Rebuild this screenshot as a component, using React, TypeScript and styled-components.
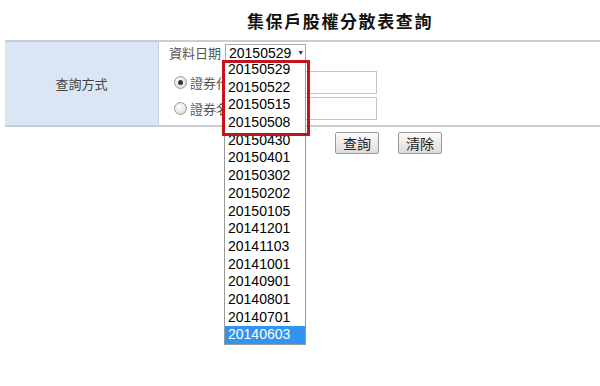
import React from "react";
import styled, { createGlobalStyle } from "styled-components";

const GlobalStyle = createGlobalStyle`
  body {
    margin: 0;
    background: #ffffff;
    font-family: "Liberation Sans", "Noto Sans CJK TC", sans-serif;
  }
`;

const Page = styled.div`
  width: 600px;
  height: 386px;
  overflow: hidden;
`;

const Title = styled.h1`
  margin: 0;
  height: 40px;
  padding-left: 80px;
  box-sizing: border-box;
  text-align: center;
  font-family: "Noto Sans CJK TC", sans-serif;
  font-size: 17px;
  font-weight: 700;
  letter-spacing: 1.6px;
  line-height: 42px;
  color: #111;
`;

const Table = styled.div`
  margin-left: 5px;
  display: grid;
  grid-template-columns: 154px 1fr;
  border-top: 2px solid #c9ced6;
  border-bottom: 2px solid #c9ced6;
`;

const LabelCell = styled.div`
  display: flex;
  align-items: center;
  justify-content: center;
  background: #dbe6f5;
  border-right: 1px solid #c6d0de;
  font-family: "Noto Sans CJK TC", sans-serif;
  font-size: 13px;
  color: #444;
`;

const ContentCell = styled.div`
  padding: 2px 0 2px 10px;
  display: flex;
  flex-direction: column;
`;

const DateRow = styled.div`
  display: flex;
  align-items: center;
  gap: 4px;
  height: 17px;
  margin-bottom: 10px;
`;

const FieldLabel = styled.span`
  font-family: "Noto Sans CJK TC", sans-serif;
  font-size: 13px;
  color: #555;
`;

const SelectWrap = styled.div`
  position: relative;
`;

const SelectBox = styled.div`
  width: 81px;
  height: 17px;
  box-sizing: border-box;
  border: 1px solid #a8a8a8;
  padding-left: 3px;
  display: flex;
  align-items: center;
  gap: 6px;
  font-size: 14px;
  color: #000;
  background: #fff;
`;

const Arrow = styled.span`
  font-size: 7px;
  color: #333;
`;

const DropList = styled.ul`
  position: absolute;
  top: 16px;
  left: -1px;
  width: 82px;
  margin: 0;
  padding: 0;
  list-style: none;
  box-sizing: border-box;
  border: 1px solid #9a9a9a;
  background: #fff;
  z-index: 2;
`;

const DropItem = styled.li<{ $active?: boolean }>`
  height: 17.7px;
  line-height: 17.7px;
  padding-left: 3px;
  font-size: 14px;
  color: ${(p) => (p.$active ? "#fff" : "#000")};
  background: ${(p) => (p.$active ? "#3194f0" : "transparent")};
`;

const Highlight = styled.div`
  position: absolute;
  top: 16px;
  left: -3px;
  width: 88px;
  height: 76px;
  box-sizing: border-box;
  border: 3px solid #c3141d;
  z-index: 3;
`;

const RadioRow = styled.div`
  display: grid;
  grid-template-columns: 130px 73px;
  align-items: center;
  height: 23px;
  padding-left: 5px;
  margin-bottom: 3px;
`;

const RadioLabel = styled.label`
  display: flex;
  align-items: center;
  gap: 3px;
  font-family: "Noto Sans CJK TC", sans-serif;
  font-size: 13px;
  color: #555;
`;

const Radio = styled.span<{ $checked?: boolean }>`
  width: 11px;
  height: 11px;
  border-radius: 50%;
  border: 1px solid #9c9c9c;
  background: radial-gradient(circle at 40% 35%, #ffffff 0%, #e4e4e4 60%, #cfcfcf 100%);
  display: flex;
  align-items: center;
  justify-content: center;
  &::after {
    content: "";
    width: 5px;
    height: 5px;
    border-radius: 50%;
    background: ${(p) => (p.$checked ? "#333" : "transparent")};
  }
`;

const TextInput = styled.div`
  height: 23px;
  box-sizing: border-box;
  border: 1px solid #c6c6c6;
  background: #fff;
`;

const ButtonRow = styled.div`
  display: flex;
  align-items: flex-start;
  gap: 19px;
  padding: 5px 0 0 335px;
`;

const Button = styled.button`
  height: 22px;
  box-sizing: border-box;
  padding: 0 7px;
  border: 1px solid #9a9a9a;
  border-radius: 2px;
  background: linear-gradient(#fbfbfb, #dcdcdc);
  font-family: "Noto Sans CJK TC", sans-serif;
  font-size: 14px;
  line-height: 20px;
  color: #222;
`;

const dates = [
  "20150529",
  "20150522",
  "20150515",
  "20150508",
  "20150430",
  "20150401",
  "20150302",
  "20150202",
  "20150105",
  "20141201",
  "20141103",
  "20141001",
  "20140901",
  "20140801",
  "20140701",
  "20140603",
];

export default function App() {
  return (
    <Page>
      <GlobalStyle />
      <Title>集保戶股權分散表查詢</Title>
      <Table>
        <LabelCell>查詢方式</LabelCell>
        <ContentCell>
          <DateRow>
            <FieldLabel>資料日期</FieldLabel>
            <SelectWrap>
              <SelectBox>
                20150529 <Arrow>▼</Arrow>
              </SelectBox>
              <DropList>
                {dates.map((d) => (
                  <DropItem key={d} $active={d === "20140603"}>
                    {d}
                  </DropItem>
                ))}
              </DropList>
              <Highlight />
            </SelectWrap>
          </DateRow>
          <RadioRow>
            <RadioLabel>
              <Radio $checked />
              證券代號
            </RadioLabel>
            <TextInput />
          </RadioRow>
          <RadioRow>
            <RadioLabel>
              <Radio />
              證券名稱
            </RadioLabel>
            <TextInput />
          </RadioRow>
        </ContentCell>
      </Table>
      <ButtonRow>
        <Button>查詢</Button>
        <Button>清除</Button>
      </ButtonRow>
    </Page>
  );
}
